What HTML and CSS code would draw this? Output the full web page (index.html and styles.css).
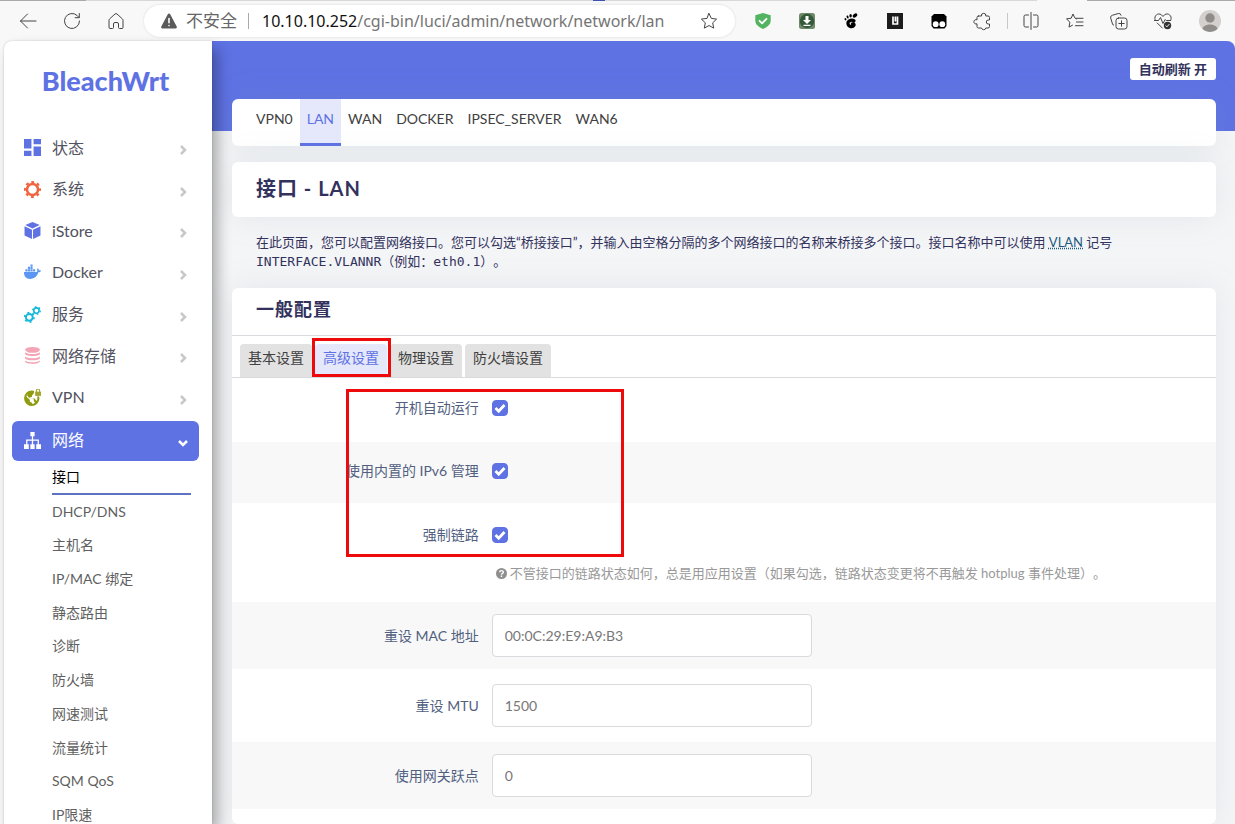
FILE: index.html
```html
<!DOCTYPE html>
<html lang="zh-CN">
<head>
<meta charset="utf-8">
<meta name="viewport" content="width=device-width, initial-scale=1">
<title>BleachWrt - 接口 - LAN</title>
<link rel="stylesheet" href="styles.css">
</head>
<body>
<div class="tabstrip" aria-hidden="true"></div>
<header class="browser">
  <button class="tool" aria-label="后退"><svg viewBox="0 0 20 20"><path d="M18 10H2.5M9.5 3L2.5 10l7 7"/></svg></button>
  <button class="tool" aria-label="刷新"><svg viewBox="0 0 20 20"><path d="M17.5 10a7.5 7.5 0 1 1-2.4-5.5L17 6.500M17.300 2.500v4.200h-4.200"/></svg></button>
  <button class="tool" aria-label="主页"><svg viewBox="0 0 20 20"><path d="M3 9.200a1.500 1.500 0 0 1 .5-1.200l5.500-5a1.500 1.500 0 0 1 2 0l5.500 5a1.500 1.500 0 0 1 .5 1.200v7.300a1 1 0 0 1-1 1h-2.500a1 1 0 0 1-1-1v-3.500a1.500 1.500 0 0 0-1.500-1.500h-2a1.500 1.500 0 0 0-1.500 1.500v3.500a1 1 0 0 1-1 1H4a1 1 0 0 1-1-1z"/></svg></button>
  <div class="address">
    <svg class="warn" viewBox="0 0 18 18"><path fill="#5a5a5a" d="M9 1.500a1.300 1.300 0 0 1 1.200.7l6.500 12.300a1.300 1.300 0 0 1-1.200 2h-13a1.300 1.300 0 0 1-1.200-2L7.800 2.200A1.300 1.300 0 0 1 9 1.500z"/><path stroke="#fff" stroke-width="1.600" stroke-linecap="round" d="M9 6.500v4.200M9 13.500v.1"/></svg>
    <span class="unsafe">不安全</span>
    <span class="address-rule"></span>
    <span class="url" role="textbox" aria-label="地址"><b>10.10.10.252</b>/cgi-bin/luci/admin/network/network/lan</span>
    <button class="fav" aria-label="收藏"><svg viewBox="0 0 20 20"><path d="M10 2.500l2.300 4.900 5.300.7-3.900 3.700 1 5.300-4.700-2.600-4.700 2.600 1-5.300-3.900-3.700 5.300-.7z"/></svg></button>
  </div>
  <button class="tool" aria-label="安全盾"><svg viewBox="0 0 20 20"><path fill="#52b460" stroke="none" d="M10 2l7.700 2.300v5.200c0 4-3.500 6.800-7.700 8.500-4.200-1.700-7.700-4.500-7.700-8.500V4.300z"/><path stroke="#fff" stroke-width="1.800" d="M6.500 9.800l2.600 2.500 4.400-4.500"/></svg></button>
  <button class="tool" aria-label="下载器"><svg viewBox="0 0 20 20"><rect x="2" y="2" width="16" height="16" rx="2.500" fill="#6f8a6b" stroke="none"/><circle cx="10" cy="10" r="7.200" fill="#355a39" stroke="none"/><path stroke="none" fill="#fff" d="M8.500 5h3v4H14l-4 4-4-4h2.500zM6.500 13.700h7v1.300h-7z"/></svg></button>
  <button class="tool" aria-label="GNOME"><svg viewBox="0 0 20 20"><g fill="#000" stroke="none"><ellipse cx="14" cy="4.500" rx="2.600" ry="1.700" transform="rotate(-35 14 4.500)"/><ellipse cx="9.600" cy="4.700" rx="1.200" ry="1.800"/><ellipse cx="6.600" cy="6" rx="1" ry="1.500" transform="rotate(-20 6.600 6)"/><ellipse cx="4.500" cy="8.300" rx=".9" ry="1.200" transform="rotate(-30 4.500 8.300)"/></g><path stroke="#000" stroke-width="3.200" d="M13 9.800c-3-1.500-6.500.3-6 3 .5 3 4.500 4 6 1.500.3-1 0-1.400-1.600-1.400"/></svg></button>
  <button class="tool" aria-label="扩展 LI"><svg viewBox="0 0 20 20"><path fill="#1c1c1c" stroke="none" d="M2 2h16v16H2z"/><path stroke="#fff" stroke-width="1.700" stroke-linecap="butt" stroke-linejoin="miter" d="M8 5.500v7.500h4.500V5.500M10.400 5.500v5"/></svg></button>
  <button class="tool" aria-label="油猴"><svg viewBox="0 0 20 20"><path fill="#000" stroke="none" d="M5 3h10l2.500 2.500V15l-2 2.500h-11L2.500 15V5.500z"/><circle cx="6.700" cy="13.200" r="2.900" fill="#fff" stroke="none"/><circle cx="13.300" cy="13.200" r="2.900" fill="#fff" stroke="none"/></svg></button>
  <button class="tool" aria-label="扩展"><svg viewBox="0 0 20 20"><path d="M5.500 5h3a2.200 2.200 0 1 1 4.300 0H15a1.500 1.500 0 0 1 1.500 1.500V9h-1.200a2 2 0 0 0 0 4h1.200v2.500A1.500 1.500 0 0 1 15 17h-2.200a2.200 2.200 0 0 1-4.300 0h-3A1.500 1.500 0 0 1 4 15.500v-2.700a2.200 2.200 0 1 1 0-4V6.500A1.500 1.500 0 0 1 5.500 5z"/></svg></button>
  <span class="tool-rule"></span>
  <button class="tool" aria-label="拆分屏幕"><svg viewBox="0 0 20 20"><path d="M10 1.500v17M7.500 4h-3A1.500 1.500 0 0 0 3 5.500v9A1.500 1.500 0 0 0 4.500 16h3M12.500 4h3A1.500 1.500 0 0 1 17 5.500v9a1.500 1.500 0 0 1-1.500 1.500h-3"/></svg></button>
  <button class="tool" aria-label="收藏夹"><svg viewBox="0 0 20 20"><path d="M11.500 8L9.700 6.700 8 3 6.200 7.200l-4.700.7 3.400 3.300-.9 4.900 3.500-1.900M11 7.300h7M11.500 11H18M10.500 14.700H18"/></svg></button>
  <button class="tool" aria-label="集锦"><svg viewBox="0 0 20 20"><rect x="7" y="7" width="11" height="11" rx="2.500"/><path d="M12.500 9.800v5.400M9.800 12.500h5.400M4.600 14l-.9-.4-2-6.500a2.300 2.300 0 0 1 1.600-2.800l6-1.800a2.300 2.300 0 0 1 2.800 1.700"/></svg></button>
  <button class="tool" aria-label="性能"><svg viewBox="0 0 20 20"><path d="M2 8.500C.8 4.500 5 1.500 8.300 3.700L10 5.500l1.700-1.800C15 1.500 19.200 4.500 18 8.500M1.500 9.500h4l2-3 2.500 6 2.200-4 1 1h4.500M4.300 12l5 5"/><circle cx="14.500" cy="14.500" r="3.700" fill="#333" stroke="none"/><path stroke="#fff" d="M12.900 14.800l1 1 2.200-2.400"/></svg></button>
  <button class="tool tool-avatar" aria-label="用户"><svg viewBox="0 0 22 22"><circle cx="11" cy="11" r="11" fill="#d3d0cd" stroke="none"/><circle cx="11" cy="8" r="4.700" fill="#8f8c89" stroke="none"/><path fill="#8f8c89" stroke="none" d="M3.500 19c1-6 14-6 15 0a11 11 0 0 1-15 0z"/></svg></button>
</header>

<div class="page">
  <aside class="sidebar">
    <a class="brand" href="#">BleachWrt</a>
    <nav aria-label="主菜单">
      <ul class="menu">
        <li><a class="item" href="#"><svg viewBox="0 0 16 16" fill="#5e72e4"><path d="M0 0h7v9H0zM9 0h7v5H9zM0 11h7v5H0zM9 7h7v9H9z"/></svg><span>状态</span><svg class="chev" viewBox="0 0 10 10"><path d="M3 1l4 4-4 4"/></svg></a></li>
        <li><a class="item" href="#"><svg viewBox="0 0 16 16" fill="none" stroke="#f0653f"><circle cx="8" cy="8" r="5.200" stroke-width="2.400"/><circle cx="8" cy="8" r="7" stroke-width="2" stroke-dasharray="2.700 2.798" stroke-dashoffset="1.350"/></svg><span>系统</span><svg class="chev" viewBox="0 0 10 10"><path d="M3 1l4 4-4 4"/></svg></a></li>
        <li><a class="item" href="#"><svg viewBox="0 0 16 16" fill="#5e72e4"><path d="M8 0l6.800 2.900L8 6 1.200 2.900zM.5 4l7 3.200V16L.5 12.600zM15.500 4l-7 3.200V16l7-3.400z"/></svg><span>iStore</span><svg class="chev" viewBox="0 0 10 10"><path d="M3 1l4 4-4 4"/></svg></a></li>
        <li><a class="item" href="#"><svg viewBox="0 0 16 16" fill="#5b96f2"><path d="M0 7.500h12c.7 0 .7-1.800.2-2.500l.8-1c.8.600 1 1.300 1 2 .8-.2 1.600 0 2 .3-.4 1-1.400 1.500-2.500 1.500C12.400 11.500 10 14 5.800 14 1.800 14-.2 11.500 0 7.500zM1.300 5h2v2h-2zM3.700 5h2v2h-2zM6.100 5h2v2h-2zM8.500 5h2v2h-2zM3.700 2.700h2v1.900h-2zM6.100 2.700h2v1.900h-2zM6.100.400h2v1.900h-2z"/></svg><span>Docker</span><svg class="chev" viewBox="0 0 10 10"><path d="M3 1l4 4-4 4"/></svg></a></li>
        <li><a class="item" href="#"><svg viewBox="0 0 16 16" fill="none" stroke="#11b9d8"><circle cx="5" cy="10.700" r="3.200" stroke-width="1.800"/><circle cx="5" cy="10.700" r="4.500" stroke-width="1.400" stroke-dasharray="1.900 2.812"/><circle cx="11.700" cy="4.300" r="2.500" stroke-width="1.500"/><circle cx="11.700" cy="4.300" r="3.600" stroke-width="1.300" stroke-dasharray="1.500 2.270"/></svg><span>服务</span><svg class="chev" viewBox="0 0 10 10"><path d="M3 1l4 4-4 4"/></svg></a></li>
        <li><a class="item" href="#"><svg viewBox="0 0 16 16" fill="#f3a4b5"><ellipse cx="8" cy="2.700" rx="7" ry="2.700"/><path d="M1 5c2 2.200 12 2.200 14 0v1.700c-1 2.600-13 2.600-14 0zM1 9c2 2.200 12 2.200 14 0v1.500c-1 2.600-13 2.600-14 0zM1 12.700c2 2.200 12 2.200 14 0v1c-1 3-13 3-14 0z"/></svg><span>网络存储</span><svg class="chev" viewBox="0 0 10 10"><path d="M3 1l4 4-4 4"/></svg></a></li>
        <li><a class="item" href="#"><svg viewBox="0 0 16 16"><circle cx="7.300" cy="8.700" r="6.300" fill="#fff" stroke="#8f9c10" stroke-width="1.900"/><path fill="#8f9c10" d="M1 6l4.500 4v2l2 1v2.500C3 15.500.5 12 1 6zM4 3l5-1v2.500L7.500 6v1.500H6V9h4l1.500 2H13l-1.500 3-2-2L9 9.500 4.500 8 3 6z"/><path fill="#fff" d="M9.500 0H16v7H9.500z"/><path fill="#a1a52b" d="M10.500 2.500h5.500V6.500h-5.500z"/><path fill="none" stroke="#a1a52b" d="M11.700 3V1.500a1.500 1.500 0 0 1 3 0V3"/></svg><span>VPN</span><svg class="chev" viewBox="0 0 10 10"><path d="M3 1l4 4-4 4"/></svg></a></li>
      </ul>
      <a class="item item-open" href="#" aria-expanded="true"><svg viewBox="0 0 16 16" fill="#fff"><path d="M6 0h4v4H8.600v3H14v4.500h2V16h-4.500v-4.500h1.300V8.200H8.600v3.300H10V16H6v-4.500h1.400V8.200H3.200v3.300h1.300V16H0v-4.500h2V7h5.400V4H6z"/></svg><span>网络</span><svg class="chev" viewBox="0 0 10 10"><path d="M1 3l4 4 4-4"/></svg></a>
      <ul class="submenu">
        <li><a class="current" href="#">接口</a></li>
        <li><a href="#">DHCP/DNS</a></li>
        <li><a href="#">主机名</a></li>
        <li><a href="#">IP/MAC 绑定</a></li>
        <li><a href="#">静态路由</a></li>
        <li><a href="#">诊断</a></li>
        <li><a href="#">防火墙</a></li>
        <li><a href="#">网速测试</a></li>
        <li><a href="#">流量统计</a></li>
        <li><a href="#">SQM QoS</a></li>
        <li><a href="#">IP限速</a></li>
      </ul>
    </nav>
  </aside>

  <main class="main">
    <div class="banner"><button class="refresh">自动刷新 开</button></div>
    <div class="content">
      <nav class="card nets" aria-label="接口列表">
        <a href="#">VPN0</a><a class="on" href="#">LAN</a><a href="#">WAN</a><a href="#">DOCKER</a><a href="#">IPSEC_SERVER</a><a href="#">WAN6</a>
      </nav>
      <h1 class="card title">接口 - LAN</h1>
      <p class="intro">在此页面，您可以配置网络接口。您可以勾选“桥接接口”，并输入由空格分隔的多个网络接口的名称来桥接多个接口。接口名称中可以使用 <abbr title="Virtual Local Area Network">VLAN</abbr> 记号 <code>INTERFACE.VLANNR</code>（例如：<code>eth0.1</code>）。</p>
      <section class="card config">
        <h2>一般配置</h2>
        <div class="tabs">
          <button>基本设置</button><button class="on">高级设置</button><button>物理设置</button><button>防火墙设置</button>
          <span class="mark mark-tab"></span>
        </div>
        <form class="form">
          <div class="row row-check"><label for="auto">开机自动运行</label><input class="check" type="checkbox" id="auto" checked></div>
          <div class="row row-check alt"><label for="v6">使用内置的 IPv6 管理</label><input class="check" type="checkbox" id="v6" checked></div>
          <div class="row row-check"><label for="force">强制链路</label><div class="field"><input class="check" type="checkbox" id="force" checked>
            <p class="hint"><svg viewBox="0 0 12 12"><circle cx="6" cy="6" r="6" fill="#8f8f8f"/><path fill="none" stroke="#fff" stroke-width="1.500" d="M4 4.700C4 2.300 8 2.300 8 4.600 8 6 6 5.700 6 7.300M6 8.300v1.400"/></svg>不管接口的链路状态如何，总是用应用设置（如果勾选，链路状态变更将不再触发 hotplug 事件处理）。</p></div></div>
          <div class="row row-text alt"><label for="mac">重设 MAC 地址</label><input class="text" id="mac" type="text" placeholder="00:0C:29:E9:A9:B3"></div>
          <div class="row row-text"><label for="mtu">重设 MTU</label><input class="text" id="mtu" type="text" placeholder="1500"></div>
          <div class="row row-text alt"><label for="metric">使用网关跃点</label><input class="text" id="metric" type="text" placeholder="0"></div>
          <span class="mark mark-form"></span>
        </form>
      </section>
    </div>
  </main>
</div>
</body>
</html>
```
FILE: styles.css
```css
* { box-sizing: border-box; }

body {
  margin: 0;
  height: 100vh;
  display: flex;
  flex-direction: column;
  overflow: hidden;
  background: #f8f8f8;
  color: #32325d;
  font: 14px/20px Lato, "Noto Sans CJK SC", sans-serif;
  text-spacing-trim: space-all;
}

a { color: inherit; text-decoration: none; }
ul { list-style: none; margin: 0; padding: 0; }
button { font: inherit; border: 0; padding: 0; background: none; color: inherit; }

/* browser toolbar */
.tabstrip {
  flex: none;
  height: 1px;
  background: linear-gradient(90deg, #a9a9a9 0 7%, #d8d8d8 7% 48%, #3f51b5 48% 49%, #d8d8d8 49% 84%, #f8f8f8 84% 88%, #a9a9a9 88%);
}
.browser {
  flex: none;
  display: flex;
  align-items: center;
  height: 40px;
  padding: 0 3px 0 6px;
}
.tool { flex: none; width: 44px; height: 32px; display: grid; place-items: center; }
.tool svg, .fav svg {
  width: 20px;
  height: 20px;
  fill: none;
  stroke: #444;
  stroke-linecap: round;
  stroke-linejoin: round;
}
.tool-avatar { margin-left: 3px; }
.tool-avatar svg { width: 22px; height: 22px; }
.tool-rule { width: 1px; height: 16px; margin: 0 1px 0 2px; background: #c8c8c8; }
.address {
  flex: 1;
  min-width: 0;
  display: flex;
  align-items: center;
  height: 32px;
  margin: 0 6px;
  padding: 0 16px;
  border-radius: 16px;
  background: #fff;
  box-shadow: 0 0 3px rgba(0, 0, 0, .12);
}
.warn { width: 18px; height: 18px; fill: none; flex: none; margin-right: 8px; }
.unsafe { font-size: 17px; color: #666; white-space: nowrap; }
.address-rule { width: 1px; height: 16px; margin: 0 13px 0 11px; background: #aaa; }
.url {
  flex: 1;
  min-width: 0;
  overflow: hidden;
  white-space: nowrap;
  font: 16px/24px "Noto Sans", sans-serif;
  color: #757575;
}
.url b { font-weight: 400; color: #111; }
.fav { display: grid; place-items: center; }

/* page frame */
.page { flex: 1; min-height: 0; display: flex; padding-left: 4px; }
.sidebar {
  flex: none;
  width: 208px;
  z-index: 1;
  overflow: clip;
  overflow-clip-margin: 24px;
  padding: 24px 13px 0 8px;
  border-radius: 8px 0 0 0;
  background: #fff;
  box-shadow: 0 0 2px rgba(0, 0, 0, .2), 6px 8px 14px rgba(0, 0, 0, .3);
}
.brand {
  display: block;
  height: 63px;
  text-align: center;
  font-size: 27px;
  line-height: 32px;
  font-weight: 900;
  color: #5e72e4;
}
.menu { display: grid; grid-auto-rows: 1fr; align-items: center; min-height: 291px; }
.item {
  display: flex;
  align-items: center;
  gap: 11px;
  height: 40px;
  padding: 0 11px 2px 12px;
  border-radius: 6px;
  font-size: 16px;
  color: #525260;
}
.item svg { width: 17px; height: 17px; flex: none; }
.item span { flex: 1; }
.item .chev { width: 10px; height: 10px; margin-top: 5px; fill: none; stroke: #c8c8c8; stroke-width: 2.500; }
.item-open { margin-top: 2px; background: #5e72e4; color: #fff; }
.item-open .chev { stroke: #fff; }
.submenu { display: grid; grid-auto-rows: 1fr; min-height: 371px; padding: 0 8px 0 40px; color: #5f5f5f; }
.submenu li { display: grid; }
.submenu a { display: flex; align-items: center; }
.submenu .current { color: #000; border-bottom: 2px solid #5e72c4; }

.main {
  flex: 1;
  min-width: 0;
  background: #f4f5f7;
  border-radius: 0 8px 0 0;
  overflow: hidden;
}
.banner { display: flex; justify-content: flex-end; height: 90px; padding: 17px 19px; background: #5e72e4; }
.refresh {
  height: 22px;
  padding: 0 9px;
  border-radius: 3px;
  background: #fff;
  font-size: 13px;
  font-weight: 700;
}
.content { margin-top: -32px; padding: 0 19px 0 20px; }
.card { border-radius: 6px; background: #fff; box-shadow: 0 0 32px rgba(136, 152, 170, .15); }

.nets { display: flex; height: 47px; padding: 0 17px; color: #404040; }
.nets a { padding: 10px 7px; }
.nets .on { background: #e4e8fa; color: #5e72e4; border-bottom: 3px solid #5e72e4; }

.title {
  margin: 16px 0;
  padding: 12px 24px 15px;
  font-size: 20px;
  line-height: 28px;
  font-weight: 700;
  letter-spacing: 1px;
}
.intro { margin: 0; padding: 0 24px 17px; font-size: 13px; line-height: 19px; }
.intro abbr { color: #1c5a80; text-decoration: underline dotted; }
.intro code { font: 13px/19px "DejaVu Sans Mono", monospace; }

.config { padding-bottom: 15px; }
.config h2 {
  margin: 0;
  padding: 9px 24px 14px;
  border-bottom: 1px solid #d8dadd;
  font-size: 18px;
  line-height: 24px;
  letter-spacing: 1px;
}
.tabs { position: relative; display: flex; gap: 3px; padding: 8px 8px 0; border-bottom: 1px solid #d8dadd; }
.tabs button {
  height: 33px;
  padding: 0 8px 5px;
  border-radius: 4px 4px 0 0;
  background: #e2e2e2;
  color: #404040;
}
.tabs .on { background: #e4e8fa; color: #5e72e4; }

.form { position: relative; }
.row { display: flex; gap: 13px; padding-left: 1px; }
.row label { flex: none; width: 25%; text-align: right; color: #525f7f; }
.alt { background: #f8f8f9; }
.row-check { padding-top: 20px; padding-bottom: 24px; }
.row-check.alt { padding-top: 19px; padding-bottom: 22px; }
.row-check:has(.field) { padding-top: 22px; padding-bottom: 19px; }
.row-text { align-items: center; padding-top: 15px; padding-bottom: 15px; }
.row-text.alt { padding-top: 12px; padding-bottom: 12px; }
.check {
  appearance: none;
  display: block;
  width: 16px;
  height: 16px;
  margin: 2px 0;
  border-radius: 4px;
  border: 1px solid #5e72e4;
}
.check:checked {
  background: #5e72e4 url("data:image/svg+xml,%3Csvg xmlns='http://www.w3.org/2000/svg' viewBox='0 0 14 14'%3E%3Cpath d='M2.500 7l3.200 3.200L11.500 4' fill='none' stroke='%23fff' stroke-width='2.800'/%3E%3C/svg%3E") center / 14px;
}
.hint {
  display: flex;
  align-items: center;
  gap: 3px;
  margin: 20px 0 0 4px;
  font-size: 13px;
  color: #999;
}
.hint svg { width: 11px; height: 11px; flex: none; }
.text {
  width: 320px;
  height: 43px;
  padding: 0 12px;
  border: 1px solid #d8dadd;
  border-radius: 4px;
  background: #fff;
  font: inherit;
}
.text::placeholder { color: #777; opacity: 1; }

/* red annotation frames over the settings */
.mark { position: absolute; border: 3px solid #ee0a0a; pointer-events: none; }
.mark-tab { left: 80px; top: 2px; width: 79px; height: 39px; }
.mark-form { left: 114px; top: 11px; width: 278px; height: 168px; }
```
